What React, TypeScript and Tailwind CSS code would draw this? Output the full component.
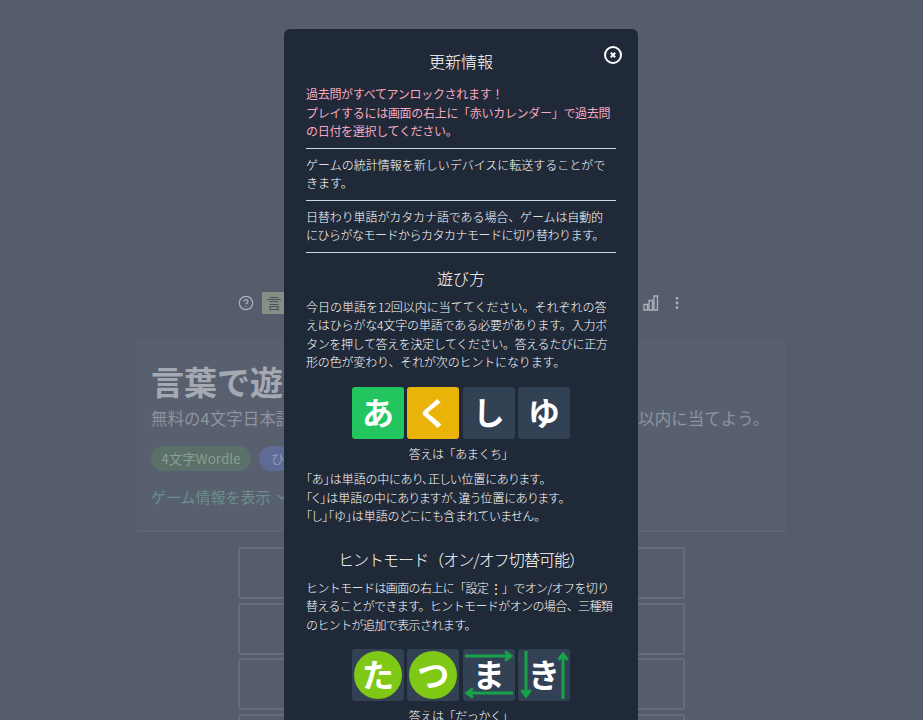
import { CircleHelp, ChevronDown, EllipsisVertical } from "lucide-react";

const Tile = ({ letter, className = "", children }: { letter: string; className?: string; children?: React.ReactNode }) => (
  <div className={`relative w-[52px] h-[52px] rounded-[3px] flex items-center justify-center text-[32px] leading-none font-bold text-white ${className}`}>
    {children}
    <span className="relative pb-[4px]">{letter}</span>
  </div>
);

const Circle = () => <div className="absolute inset-[2px] rounded-full bg-[#7fc815]" />;

const Arrows = ({ vertical }: { vertical?: boolean }) => (
  <svg className="absolute inset-0" width="52" height="52" viewBox="0 0 52 52" fill="none" stroke="#16a34a" strokeWidth="3">
    {vertical ? (
      <>
        <path d="M8 2v45M3.500 41l4.500 6 4.500-6" />
        <path d="M45 50V5M40.500 11L45 5l4.500 6" />
      </>
    ) : (
      <>
        <path d="M2 7h46M42 2.500L48 7l-6 4.500" />
        <path d="M50 44H4M10 39.500L4 44l6 4.500" />
      </>
    )}
  </svg>
);

const Divider = () => <hr className="border-0 h-px bg-[#d5dae2]" />;

export default function App() {
  return (
    <div className="relative h-[720px] overflow-hidden bg-[#555d6d] font-['Noto_Sans_CJK_JP','Noto_Sans',sans-serif]">
      {/* page behind the dialog */}
      <div className="w-[649px] ml-[137px] pt-[292px]">
        <div className="w-[447px] ml-[101px] h-[22px] flex items-center justify-between text-[#aeb2bb]">
          <div className="flex items-center gap-2">
            <CircleHelp size={16} strokeWidth={1.75} />
            <div className="w-[24px] h-[22px] bg-[#858f85] text-[#4b5260] text-[15px] leading-[22px] text-center">言</div>
          </div>
          <div className="flex items-center gap-[10px]">
            <svg width="16" height="16" viewBox="0 0 16 16" fill="none" stroke="currentColor" strokeWidth="1.3">
              <path d="M1 9.500h3.500V15H1zM6 5.500h3.500V15H6zM11 1h3.500v14H11z" />
            </svg>
            <EllipsisVertical size={16} strokeWidth={2.25} />
          </div>
        </div>
        <div className="mt-[26px] h-[192px] bg-[#586070] border-b border-[#616877] pl-[14px] pt-[21px]">
          <h1 className="text-[33px] leading-[40px] font-bold text-[#a5a9b2]">言葉で遊ぶ</h1>
          <p className="mt-[5px] text-[16.500px] leading-[25px] text-[#8e939e] whitespace-nowrap">無料の4文字日本語パズルゲームです。ひらがなの単語を毎日12回以内に当てよう。</p>
          <div className="mt-[15px] flex gap-2">
            <span className="w-[100px] h-[25px] rounded-full bg-[#5a7068] text-[#8a9d94] text-[13.500px] leading-[25px] text-center">4文字Wordle</span>
            <span className="w-[80px] h-[25px] rounded-full bg-[#5f6b94] text-[#8d97b8] text-[13.500px] leading-[25px] pl-3">ひらがな</span>
          </div>
          <div className="mt-[15px] flex items-center gap-[3px] text-[15px] leading-[22px] text-[#6b8f8a]">
            ゲーム情報を表示 <ChevronDown size={16} />
          </div>
        </div>
        <div className="w-[447px] ml-[101px] mt-[15px] grid grid-cols-4 gap-x-[4px] gap-y-[3.500px]">
          {Array.from({ length: 16 }).map((_, i) => (
            <div key={i} className="h-[52px] rounded-[3px] border-2 border-[#636d7c]" />
          ))}
        </div>
      </div>

      {/* dialog */}
      <div className="absolute inset-0 flex justify-center pt-[29px]">
        <div className="relative w-[354px] h-[800px] ml-[-1px] bg-[#1f2937] rounded-t-[6px] px-[22px] pt-[20px] text-[12px] leading-[18.500px] font-light text-white whitespace-nowrap">
          <button className="absolute right-[15px] top-[16px] text-white">
            <svg width="20" height="20" viewBox="0 0 20 20" fill="none" stroke="currentColor">
              <circle cx="10" cy="10" r="8" strokeWidth="2" />
              <path d="M7.800 7.800l4.400 4.400M12.200 7.800l-4.400 4.400" strokeWidth="2" />
            </svg>
          </button>
          <h2 className="text-center text-[16px] leading-[24px]">更新情報</h2>
          <p className="mt-[12px] font-normal text-[#f9a8c0] tracking-[-0.3px]">
            過去問がすべてアンロックされます！
            <br />
            プレイするには画面の右上に「赤いカレンダー」で過去問
            <br />
            の日付を選択してください。
          </p>
          <div className="mt-[7px]"><Divider /></div>
          <p className="mt-[7px]">
            ゲームの統計情報を新しいデバイスに転送することがで
            <br />
            きます。
          </p>
          <div className="mt-[7px]"><Divider /></div>
          <p className="mt-[7px] tracking-[-0.1px]">
            日替わり単語がカタカナ語である場合、ゲームは自動的
            <br />
            <span className="tracking-[-0.5px]">にひらがなモードからカタカナモードに切り替わります。</span>
          </p>
          <div className="mt-[7px]"><Divider /></div>
          <h2 className="mt-[13px] text-center text-[16px] leading-[24px]">遊び方</h2>
          <p className="mt-[8px]">
            今日の単語を12回以内に当ててください。それぞれの答
            <br />
            <span className="tracking-[-0.15px]">えはひらがな4文字の単語である必要があります。入力ボ</span>
            <br />
            <span className="tracking-[-0.35px]">タンを押して答えを決定してください。答えるたびに正方</span>
            <br />
            <span className="tracking-[-0.15px]">形の色が変わり、それが次のヒントになります。</span>
          </p>
          <div className="mt-[15px] flex justify-center gap-[3.400px]">
            <Tile letter="あ" className="bg-[#22c55e]" />
            <Tile letter="く" className="bg-[#eab308]" />
            <Tile letter="し" className="bg-[#334155]" />
            <Tile letter="ゆ" className="bg-[#334155]" />
          </div>
          <p className="mt-[6px] text-center tracking-[-0.4px]">答えは「あまくち」</p>
          <p className="mt-[7px] [font-feature-settings:'palt']">
            「あ」は単語の中にあり、正しい位置にあります。
            <br />
            「く」は単語の中にありますが、違う位置にあります。
            <br />
            「し」「ゆ」は単語のどこにも含まれていません。
          </p>
          <h2 className="mt-[21px] text-center text-[16px] leading-[24px] tracking-[-0.95px]">ヒントモード（オン/オフ切替可能）</h2>
          <p className="mt-[8px] tracking-[-0.6px]">
            ヒントモードは画面の右上に「設定 ⋮」でオン/オフを切り
            <br />
            替えることができます。ヒントモードがオンの場合、三種類
            <br />
            のヒントが追加で表示されます。
          </p>
          <div className="mt-[15px] flex justify-center gap-[3.400px]">
            <Tile letter="た" className="bg-[#334155]"><Circle /></Tile>
            <Tile letter="つ" className="bg-[#334155]"><Circle /></Tile>
            <Tile letter="ま" className="bg-[#334155]"><Arrows /></Tile>
            <Tile letter="き" className="bg-[#334155]"><Arrows vertical /></Tile>
          </div>
          <p className="mt-[6px] text-center tracking-[-0.4px]">答えは「だっかく」</p>
        </div>
      </div>
    </div>
  );
}
